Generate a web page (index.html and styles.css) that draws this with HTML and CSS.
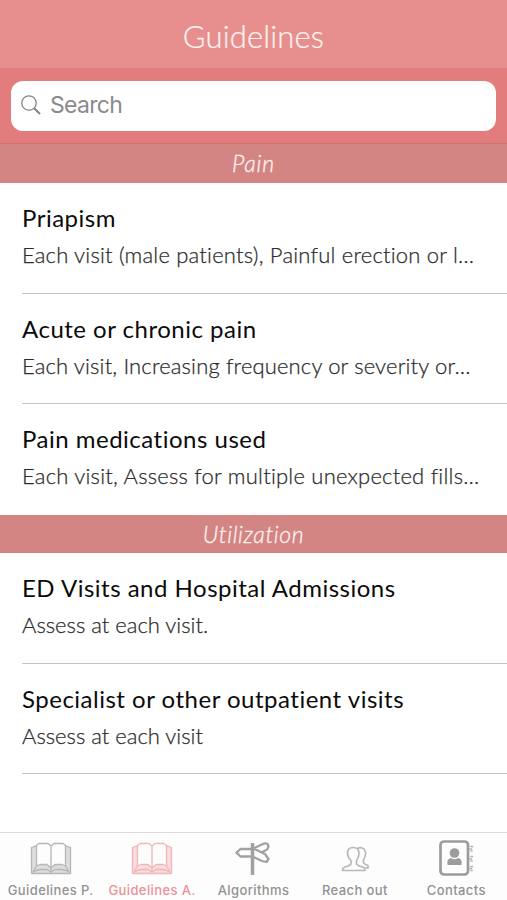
FILE: index.html
```html
<!DOCTYPE html>
<html lang="en">
<head>
<meta charset="utf-8">
<title>Guidelines</title>
<link rel="stylesheet" href="styles.css">
</head>
<body>
<div class="app">
  <header class="navbar"><h1>Guidelines</h1></header>
  <div class="searchbar">
    <div class="field">
      <svg class="glass" viewBox="0 0 20 20"><circle cx="8" cy="8" r="7.2"/><path class="handle" d="M13.2 13.2L19 19"/></svg>
      <span>Search</span>
    </div>
  </div>
  <main>
    <section>
      <h2 class="pain">Pain</h2>
      <ul>
        <li><h3>Priapism</h3><p class="s1">Each visit (male patients), Painful erection or l…</p></li>
        <li><h3>Acute or chronic pain</h3><p class="s2">Each visit, Increasing frequency or severity or…</p></li>
        <li class="last"><h3>Pain medications used</h3><p class="s3">Each visit, Assess for multiple unexpected fills…</p></li>
      </ul>
    </section>
    <section>
      <h2 class="util">Utilization</h2>
      <ul>
        <li><h3>ED Visits and Hospital Admissions</h3><p class="s4">Assess at each visit.</p></li>
        <li><h3>Specialist or other outpatient visits</h3><p class="s4">Assess at each visit</p></li>
      </ul>
    </section>
  </main>
  <nav class="tabs">
    <a class="tab">
      <svg class="icon book" viewBox="0 0 42 34"><path class="shade" d="M1.500 6L6.500 4V26L3 32H1.500zM35.500 4L40.500 6V32H39L35.500 26zM6 26l4-2h8l3 4 3-4h8l4 2 3 6H3z"/><path d="M6.500 4.500L9 2.500H18L21 5L24 2.500H33L35.500 4.500V25L32 23.500H25L21 27L17 23.500H10L6.500 25ZM21 5V32M6 5L1.500 6.500V32.500H40.500V6.500L36 5M6.500 25L3 31M35.500 25L39 31M4 30L10 28.500H17L21 31L25 28.500H32L38 30"/></svg>
      <span>Guidelines P.</span>
    </a>
    <a class="tab active">
      <svg class="icon book" viewBox="0 0 42 34"><path class="shade" d="M1.500 6L6.500 4V26L3 32H1.500zM35.500 4L40.500 6V32H39L35.500 26zM6 26l4-2h8l3 4 3-4h8l4 2 3 6H3z"/><path d="M6.500 4.500L9 2.500H18L21 5L24 2.500H33L35.500 4.500V25L32 23.500H25L21 27L17 23.500H10L6.500 25ZM21 5V32M6 5L1.500 6.500V32.500H40.500V6.500L36 5M6.500 25L3 31M35.500 25L39 31M4 30L10 28.500H17L21 31L25 28.500H32L38 30"/></svg>
      <span>Guidelines A.</span>
    </a>
    <a class="tab">
      <svg class="icon sign" viewBox="0 0 42 34"><path class="post" d="M20.500 2V34"/><path d="M20 8H8.500L4.500 11.700L8.500 15.500H20M22.500 7L32 2.500Q36 1.500 36.500 5.500Q36 8.500 33.500 9.500L30 11M22.500 8L33 13L36.500 18L34.500 21L30 20L22.500 16.500"/></svg>
      <span>Algorithms</span>
    </a>
    <a class="tab">
      <svg class="icon people" viewBox="0 0 42 34"><path d="M19 6.500Q25 6.500 25 12.500Q25 16 22.500 19.500V23Q24 25 29 26Q31 27 31 29.500H8.500Q8.500 27 10.500 26Q15.500 25 17 23V19.500Q13.500 16 13.500 12.500Q13.500 6.500 19 6.500ZM23.500 7.500Q27 5.500 30 8Q32.500 11 31 15.500L29.500 19V22Q31 23.500 34 24.500V27H31"/></svg>
      <span>Reach out</span>
    </a>
    <a class="tab">
      <svg class="icon contacts" viewBox="0 0 36 38"><rect x="2.500" y="2.500" width="27.500" height="33" rx="3.500"/><circle class="solid" cx="16.500" cy="14" r="4.800"/><path class="solid" d="M9.500 26Q8.500 19.500 13 19Q16.500 21.500 20 19Q24.500 19.500 23.500 26Z"/><path class="rings" d="M33 7.500h1.500M32 10h1.500M33 12h1M33 17.500h1.500M32 20h1.500M33 22h1M33 27.500h1.500M32 29.500h1.500M33 31.500h1"/></svg>
      <span>Contacts</span>
    </a>
  </nav>
</div>
</body>
</html>
```

FILE: styles.css
```css
* { box-sizing: border-box; margin: 0; padding: 0; }
body { background: #fff; font-family: Lato, "Open Sans", sans-serif; }
.app { width: 507px; height: 900px; display: flex; flex-direction: column; overflow: hidden; }
.navbar { height: 68px; background: #e68f8e; display: flex; justify-content: center; padding-top: 17px; }
.navbar h1 { font-size: 31px; line-height: 38px; font-weight: 300; color: #fff3ef; letter-spacing: .15px; -webkit-text-stroke: .2px; }
.searchbar { height: 76px; background: #e37d7d; border-bottom: 1px solid #c97373; padding: 12.500px 11px 0; }
.field { height: 50px; border-radius: 12px; background: #fff; display: flex; align-items: center; padding-left: 10px; color: #8a8a8d; }
.field span { font: 23px/28px Inter, sans-serif; margin-left: 9px; margin-top: -1px; letter-spacing: -.7px; }
.glass { width: 20px; height: 20px; margin-top: -2px; fill: none; stroke: #858588; stroke-width: 1.300; }
.glass .handle { stroke-width: 2; }
main { flex: 1; }
h2 { height: 39px; background: #d38584; color: #fff1ef; font-size: 23px; line-height: 38px; font-style: italic; font-weight: 300; text-align: center; letter-spacing: .9px; -webkit-text-stroke: .3px; }
.util { letter-spacing: .6px; height: 38.500px; }
ul { list-style: none; }
li { height: 110.500px; margin-left: 22px; padding-top: 18px; border-bottom: 1px solid #c5c5c5; white-space: nowrap; }
li.last { border-bottom-color: transparent; }
h3 { font-size: 24px; line-height: 34px; font-weight: 400; color: #0b0b0b; letter-spacing: .5px; }
li p { font-size: 22px; line-height: 34px; margin-top: 3px; font-weight: 300; color: #2c2c2c; -webkit-text-stroke: .25px; }
.s1 { letter-spacing: .2px; }
.s2 { letter-spacing: .15px; }
.s3 { letter-spacing: .22px; }
.s4 { letter-spacing: 0; }
.tabs { height: 68px; border-top: 1px solid #dcdcdc; background: #fdfdfd; display: grid; grid-template-columns: repeat(5, 1fr); }
.tab { display: flex; flex-direction: column; align-items: center; color: #929292; padding-top: 8px; }
.tab span { font: 500 13px/16px Inter, sans-serif; letter-spacing: .4px; margin-top: 7px; white-space: nowrap; }
.tab.active { color: #ea9297; }
.icon { width: 42px; height: 34px; fill: none; stroke: currentColor; stroke-linejoin: round; stroke-linecap: round; }
.book { stroke-width: 1.300; opacity: .65; }
.book .shade { fill: currentColor; stroke: none; opacity: .45; }
.sign { stroke-width: 2.300; opacity: .85; }
.sign .post { stroke-width: 3.500; stroke-linecap: butt; }
.people { stroke-width: 1.600; opacity: .65; }
.icon.contacts { width: 36px; height: 38px; margin: -2px 0; stroke-width: 2.700; opacity: .9; }
.contacts .solid { fill: currentColor; stroke: none; }
.contacts .rings { stroke-width: 1.700; opacity: .75; }
```
